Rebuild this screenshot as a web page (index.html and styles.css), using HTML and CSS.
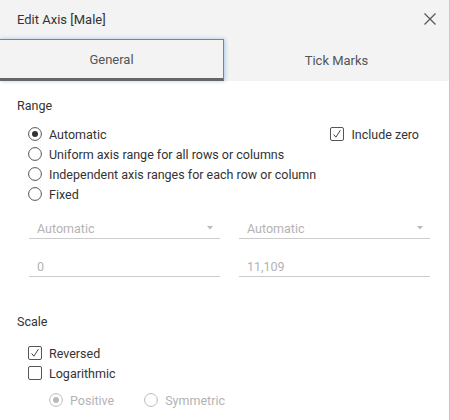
FILE: index.html
```html
<!DOCTYPE html>
<html>
<head>
<meta charset="utf-8">
<link rel="stylesheet" href="styles.css">
</head>
<body>
<div class="dialog">
  <div class="header">
    <div class="titlebar">
      <span class="title">Edit Axis [Male]</span>
      <svg class="close" width="12" height="12" viewBox="0 0 12 12"><path d="M0.5 0.5 L11.5 11.5 M11.5 0.5 L0.5 11.5" stroke="#555" stroke-width="1.2" fill="none"/></svg>
    </div>
    <div class="tabs">
      <div class="tab active">General</div>
      <div class="tab">Tick Marks</div>
    </div>
  </div>
  <div class="content">
    <div class="section-title">Range</div>
    <div class="range">
      <div class="options">
        <div class="row">
          <svg class="ctl" width="14" height="14" viewBox="0 0 14 14"><circle cx="7" cy="7" r="6.4" fill="#fff" stroke="#555" stroke-width="1"/><circle cx="7" cy="7" r="3" fill="#333"/></svg>
          <span>Automatic</span>
        </div>
        <div class="row">
          <svg class="ctl" width="14" height="14" viewBox="0 0 14 14"><circle cx="7" cy="7" r="6.4" fill="#fff" stroke="#555" stroke-width="1"/></svg>
          <span>Uniform axis range for all rows or columns</span>
        </div>
        <div class="row">
          <svg class="ctl" width="14" height="14" viewBox="0 0 14 14"><circle cx="7" cy="7" r="6.4" fill="#fff" stroke="#555" stroke-width="1"/></svg>
          <span>Independent axis ranges for each row or column</span>
        </div>
        <div class="row">
          <svg class="ctl" width="14" height="14" viewBox="0 0 14 14"><circle cx="7" cy="7" r="6.4" fill="#fff" stroke="#555" stroke-width="1"/></svg>
          <span>Fixed</span>
        </div>
      </div>
      <div class="row zero">
        <svg class="ctl" width="14" height="14" viewBox="0 0 14 14"><rect x="0.5" y="0.5" width="13" height="13" rx="1.5" fill="#fff" stroke="#555" stroke-width="1"/><path d="M3.6 7.4 L5.9 10.2 L10.4 3.2" stroke="#444" stroke-width="1" fill="none"/></svg>
        <span>Include zero</span>
      </div>
    </div>
    <div class="fields">
      <div class="field select"><span>Automatic</span><svg width="6" height="4" viewBox="0 0 6 4"><path d="M0 0 L6 0 L3 3.6 Z" fill="#bbb"/></svg></div>
      <div class="field select"><span>Automatic</span><svg width="6" height="4" viewBox="0 0 6 4"><path d="M0 0 L6 0 L3 3.6 Z" fill="#bbb"/></svg></div>
      <div class="field"><span>0</span></div>
      <div class="field"><span>11,109</span></div>
    </div>
    <div class="section-title scale-title">Scale</div>
    <div class="options scale">
      <div class="row">
        <svg class="ctl" width="14" height="14" viewBox="0 0 14 14"><rect x="0.5" y="0.5" width="13" height="13" rx="1.5" fill="#fff" stroke="#555" stroke-width="1"/><path d="M3.6 7.4 L5.9 10.2 L10.4 3.2" stroke="#444" stroke-width="1" fill="none"/></svg>
        <span>Reversed</span>
      </div>
      <div class="row">
        <svg class="ctl" width="14" height="14" viewBox="0 0 14 14"><rect x="0.5" y="0.5" width="13" height="13" rx="1.5" fill="#fff" stroke="#555" stroke-width="1"/></svg>
        <span>Logarithmic</span>
      </div>
      <div class="sub">
        <div class="item disabled">
          <svg class="ctl" width="14" height="14" viewBox="0 0 14 14"><circle cx="7" cy="7" r="6.4" fill="#fff" stroke="#bbb" stroke-width="1"/><circle cx="7" cy="7" r="3" fill="#bbb"/></svg>
          <span>Positive</span>
        </div>
        <div class="item disabled">
          <svg class="ctl" width="14" height="14" viewBox="0 0 14 14"><circle cx="7" cy="7" r="6.4" fill="#fff" stroke="#bbb" stroke-width="1"/></svg>
          <span>Symmetric</span>
        </div>
      </div>
    </div>
  </div>
</div>
</body>
</html>
```
FILE: styles.css
```css
html, body {
  margin: 0;
  padding: 0;
  background: #fff;
}
body {
  font-family: Roboto, "Liberation Sans", sans-serif;
  font-size: 12.5px;
  color: #333;
}
.dialog {
  width: 449px;
  height: 420px;
  border-right: 1px solid #c9c9c9;
  overflow: hidden;
}
.header {
  background: #f3f3f3;
  height: 81px;
  display: flex;
  flex-direction: column;
}
.titlebar {
  height: 39px;
  display: flex;
  align-items: center;
  justify-content: space-between;
  padding: 0 13px 0 17px;
}
.title {
  font-size: 13px;
  color: #333;
  margin-top: -1px;
}
.close {
  margin-top: -1px;
}
.tabs {
  flex: 1;
  display: flex;
}
.tab {
  flex: 1;
  display: flex;
  align-items: center;
  justify-content: center;
  color: #555;
  font-size: 13px;
}
.tab.active {
  flex: 0 0 224px;
  box-sizing: border-box;
  border-top: 1px solid #4a90d9;
  border-right: 1px solid #4a90d9;
  border-bottom: 3px solid #666;
  box-shadow: 1px 0 4px rgba(74, 144, 217, 0.45);
  padding-top: 1px;
  position: relative;
  z-index: 1;
}
.content {
  padding: 0 0 0 17px;
}
.section-title {
  margin-top: 17px;
  line-height: 16px;
  color: #333;
}
.range {
  display: flex;
  justify-content: space-between;
  align-items: flex-start;
  padding-right: 30px;
  margin-top: 10px;
}
.options {
  display: flex;
  flex-direction: column;
}
.row,
.item {
  display: flex;
  align-items: center;
  height: 20px;
  gap: 7px;
}
.options .row {
  padding-left: 11px;
}
.ctl {
  flex: 0 0 auto;
}
.fields {
  display: grid;
  grid-template-columns: 191px 191px;
  column-gap: 19px;
  margin: 14px 0 0 12px;
  row-gap: 17px;
}
.field {
  height: 20px;
  border-bottom: 1px solid #ccc;
  display: flex;
  align-items: center;
  justify-content: space-between;
  padding: 0 7px 0 8px;
  color: #b3b3b3;
}
.scale-title {
  margin-top: 37px;
}
.scale {
  margin-top: 13px;
}
.sub {
  display: flex;
  gap: 30px;
  margin-top: 7px;
  padding-left: 32px;
}
.disabled {
  color: #b3b3b3;
}
```
